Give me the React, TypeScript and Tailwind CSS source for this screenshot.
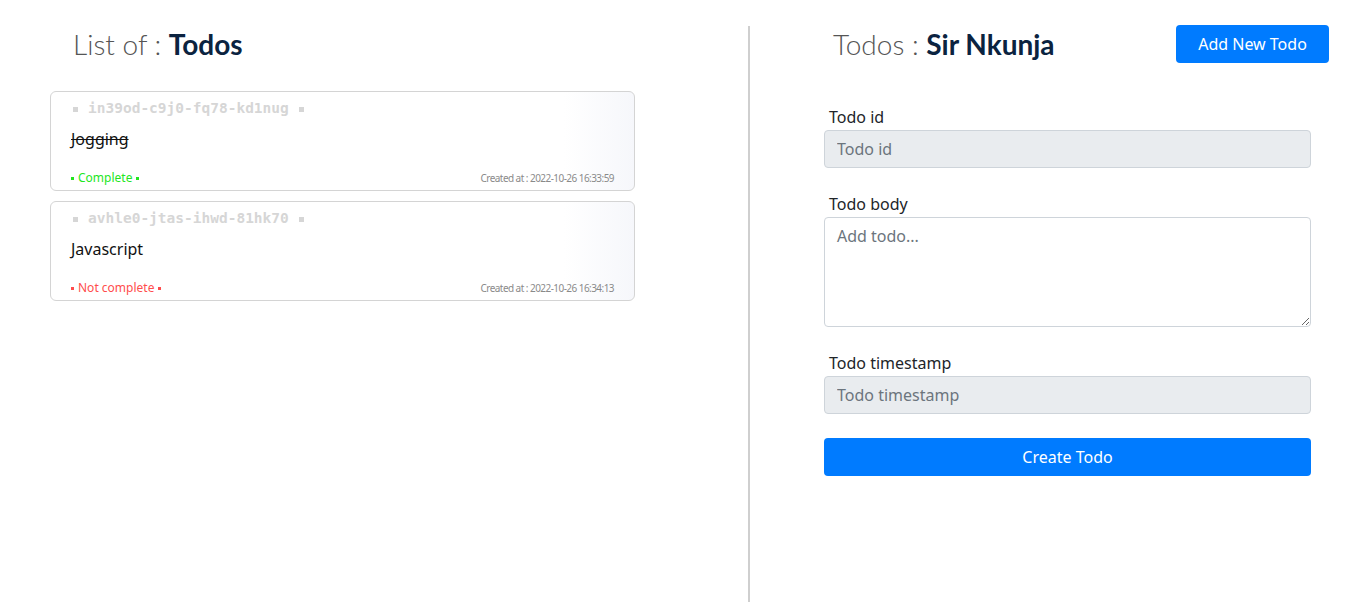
const todos = [
  {
    id: "in39od-c9j0-fq78-kd1nug",
    body: "Jogging",
    done: true,
    createdAt: "2022-10-26 16:33:59",
  },
  {
    id: "avhle0-jtas-ihwd-81hk70",
    body: "Javascript",
    done: false,
    createdAt: "2022-10-26 16:34:13",
  },
];

function Dot({ className }: { className: string }) {
  return <span className={`inline-block ${className}`} />;
}

function TodoCard({ todo }: { todo: (typeof todos)[number] }) {
  return (
    <div className="w-[585px] rounded-[6px] border border-[#d4d4d4] bg-gradient-to-r from-white from-88% to-[#f6f7fb] px-[20px] pt-[7px] pb-[5px]">
      {/* id */}
      <div className="flex h-[20px] items-center gap-[10px] pl-[2px] font-['DejaVu_Sans_Mono',monospace] text-[14.5px] font-bold text-[#d6d6d6]">
        <Dot className="h-[5px] w-[5px] bg-[#d6d6d6]" />
        <span>{todo.id}</span>
        <Dot className="h-[5px] w-[5px] bg-[#d6d6d6]" />
      </div>

      {/* body */}
      <p
        className={`mt-[9px] h-[22px] text-[16px] leading-[22px] text-[#111] ${
          todo.done ? "line-through" : ""
        }`}
      >
        {todo.body}
      </p>

      {/* footer */}
      <div className="mt-[21px] flex h-[14px] items-center justify-between">
        {todo.done ? (
          <div className="flex items-center gap-[4px] text-[12px] text-[#22e61e]">
            <Dot className="h-[3px] w-[3px] bg-[#22e61e]" />
            <span>Complete</span>
            <Dot className="h-[3px] w-[3px] bg-[#22e61e]" />
          </div>
        ) : (
          <div className="flex items-center gap-[4px] text-[12px] text-[#ff4d4d]">
            <Dot className="h-[3px] w-[3px] bg-[#ff4d4d]" />
            <span>Not complete</span>
            <Dot className="h-[3px] w-[3px] bg-[#ff4d4d]" />
          </div>
        )}
        <span className="text-[10px] tracking-[-0.55px] text-[#8a8a8a]">
          Created at : {todo.createdAt}
        </span>
      </div>
    </div>
  );
}

export default function App() {
  return (
    <div className="flex min-h-screen bg-white font-['Noto_Sans',sans-serif] text-[#212529]">
      {/* List */}
      <section className="w-[748px] shrink-0 pl-[50px] pt-[25px]">
        <h1 className="flex h-[38px] items-center pl-[23px] font-['Lato',sans-serif] text-[28px] leading-none text-[#555]">
          <span className="font-light">List of :&nbsp;</span>
          <span className="font-bold text-[#0b2340]">Todos</span>
        </h1>
        <div className="mt-[28px] flex flex-col gap-[10px]">
          {todos.map((t) => (
            <TodoCard key={t.id} todo={t} />
          ))}
        </div>
      </section>

      {/* divider */}
      <div className="mt-[26px] w-[2px] shrink-0 bg-[#cfcfcf]" />

      {/* Form */}
      <section className="flex-1 pt-[25px] pr-[37px]">
        <div className="flex h-[38px] items-center justify-between pl-[83px]">
          <h2 className="font-['Lato',sans-serif] text-[28px] leading-none text-[#555]">
            <span className="font-light">Todos :&nbsp;</span>
            <span className="font-bold text-[#0b2340]">Sir Nkunja</span>
          </h2>
          <button className="h-[38px] w-[153px] rounded-[4px] bg-[#007bff] text-[16px] text-white">
            Add New Todo
          </button>
        </div>

        <form className="ml-[74px] mt-[42px] flex w-[487px] flex-col text-[16px]">
          <label className="pl-[5px] leading-[24px]">Todo id</label>
          <input
            disabled
            placeholder="Todo id"
            className="mt-[1px] h-[38px] rounded-[4px] border border-[#ced4da] bg-[#e9ecef] px-[12px] placeholder:text-[#6c757d]"
          />

          <label className="mt-[24px] pl-[5px] leading-[24px]">Todo body</label>
          <textarea
            placeholder="Add todo..."
            className="mt-[1px] h-[110px] rounded-[4px] border border-[#ced4da] bg-white px-[12px] py-[6px] placeholder:text-[#6c757d]"
          />

          <label className="mt-[24px] pl-[5px] leading-[24px]">Todo timestamp</label>
          <input
            disabled
            placeholder="Todo timestamp"
            className="mt-[1px] h-[38px] rounded-[4px] border border-[#ced4da] bg-[#e9ecef] px-[12px] placeholder:text-[#6c757d]"
          />

          <button
            type="button"
            className="mt-[24px] h-[38px] rounded-[4px] bg-[#007bff] text-[16px] text-white"
          >
            Create Todo
          </button>
        </form>
      </section>
    </div>
  );
}
